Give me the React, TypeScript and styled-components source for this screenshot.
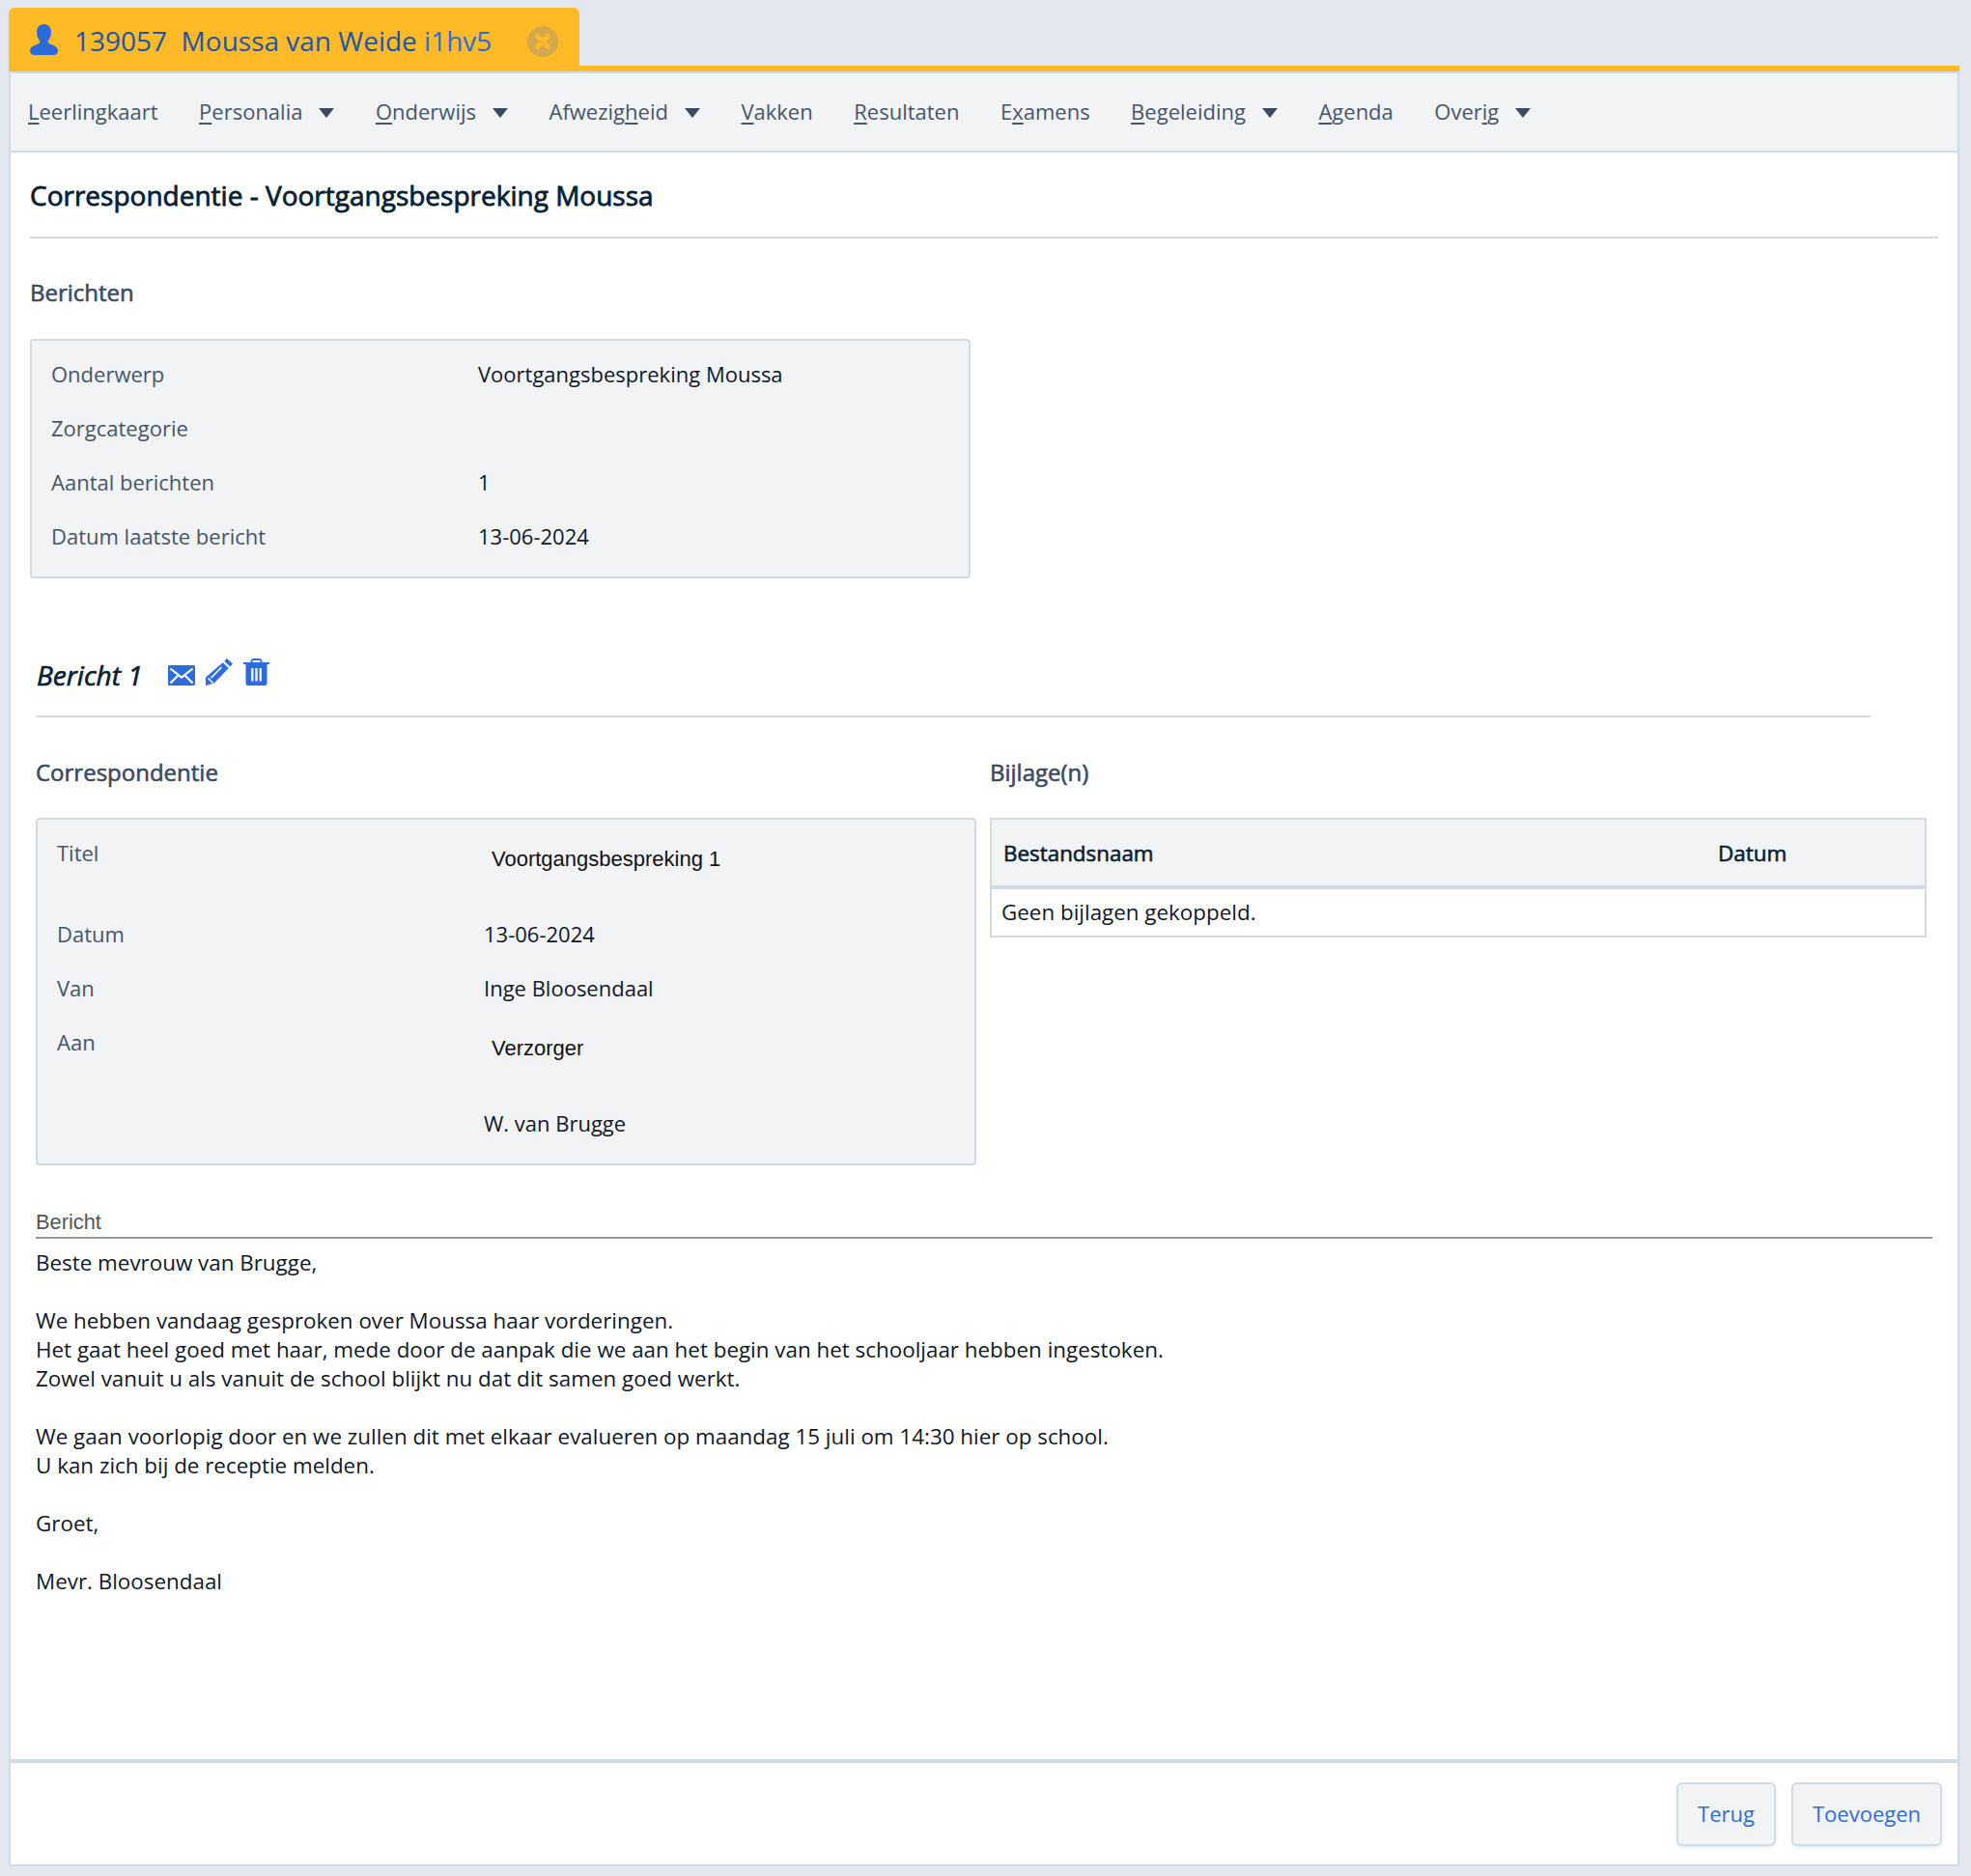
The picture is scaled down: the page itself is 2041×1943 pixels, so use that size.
import React from "react";
import styled, { createGlobalStyle } from "styled-components";

const Global = createGlobalStyle`
  html, body { margin: 0; padding: 0; background: #e3e8f0; }
  * { box-sizing: border-box; }
  body { font-family: "Open Sans", "Noto Sans", sans-serif; font-size: 22px; color: #0f172a; }
`;

const Page = styled.div`
  width: 2041px;
  height: 1943px;
  padding: 8px 12px 10px 9px;
  display: flex;
  flex-direction: column;
`;
const TabStrip = styled.div`
  flex: none;
  height: 66px;
  border-bottom: 6px solid #ffba27;
  display: flex;
`;
const Tab = styled.div`
  width: 591px;
  height: 66px;
  background: #ffba27;
  border-radius: 6px 6px 0 0;
  padding: 2px 22px 0 22px;
  display: flex;
  align-items: center;
  color: #1d55ad;
  font-size: 28px;
  white-space: pre;
`;
const TabIcon = styled.svg`
  width: 29px;
  height: 32px;
  margin: 0 17px 2px 0;
  flex: none;
`;
const TabId = styled.span`
  flex: none;
`;
const TabClass = styled.span`
  color: #2f6bdc;
`;
const CloseIcon = styled.svg`
  width: 32px;
  height: 32px;
  margin: 2px 0 0 auto;
  flex: none;
`;
const Panel = styled.div`
  flex: 1;
  min-height: 0;
  background: #fff;
  border: 2px solid #d1dbe6;
  display: flex;
  flex-direction: column;
`;
const MenuBar = styled.nav`
  flex: none;
  height: 82px;
  padding: 0 18px 2px;
  background: #f1f3f5;
  border-bottom: 2px solid #d1dbe6;
  display: flex;
  align-items: center;
  gap: 42.5px;
  color: #475569;
`;
const MenuItem = styled.span`
  display: flex;
  align-items: center;
  gap: 17px;
  white-space: nowrap;
  u { text-underline-offset: 3px; text-decoration-thickness: 2px; }
`;
const Caret = styled.i`
  width: 0;
  height: 0;
  margin-top: 4px;
  border-left: 8.5px solid transparent;
  border-right: 8.5px solid transparent;
  border-top: 10px solid #3c4a60;
`;
const Content = styled.main`
  flex: 1;
  min-height: 0;
  padding: 0 20px;
`;
const PageTitle = styled.h1`
  margin: 0;
  height: 89px;
  border-bottom: 2px solid #d1dbe6;
  line-height: 88px;
  font-size: 28px;
  font-weight: 400;
  -webkit-text-stroke: 0.8px #0a1f33;
  color: #0a1f33;
`;
const SectionTitle = styled.h2`
  margin: 0;
  height: 30px;
  line-height: 29px;
  font-size: 24px;
  font-weight: 400;
  -webkit-text-stroke: 0.6px #3c4a60;
  color: #3c4a60;
`;
const FirstTitle = styled(SectionTitle)`
  margin-top: 41px;
  margin-bottom: 33px;
`;
const InfoBox = styled.section`
  width: 974px;
  height: 248px;
  padding: 6px 20px;
  background: #f1f3f5;
  border: 2px solid #d1dbe6;
  border-radius: 4px;
`;
const Row = styled.div<{ $h?: number }>`
  display: grid;
  grid-template-columns: 442px 1fr;
  height: ${(p) => p.$h ?? 56}px;
  line-height: 56px;
  white-space: nowrap;
`;
const Label = styled.span`
  color: #475569;
`;
const Value = styled.span`
  color: #111827;
`;
const PlainValue = styled.span`
  font-family: "Liberation Sans", Arial, sans-serif;
  font-size: 22px;
  color: #111;
  margin: 7px 0 0 8px;
`;
const Message = styled.section`
  padding-left: 6px;
  margin-top: 78px;
`;
const MessageHead = styled.div`
  width: 1900px;
  height: 66px;
  padding-left: 1px;
  border-bottom: 2px solid #d1dbe6;
  display: flex;
  align-items: flex-start;
`;
const MessageTitle = styled.h2`
  margin: 0;
  height: 44px;
  line-height: 44px;
  font-size: 28px;
  font-weight: 400;
  font-style: italic;
  -webkit-text-stroke: 0.7px #0a1f33;
  color: #0a1f33;
`;
const IconRow = styled.div`
  display: flex;
  align-items: flex-end;
  gap: 11px;
  margin: 5px 0 0 26px;
  height: 28px;
  color: #2d6cdf;
`;
const Ico = styled.svg<{ $w: number; $h: number }>`
  width: ${(p) => p.$w}px;
  height: ${(p) => p.$h}px;
  flex: none;
`;
const Columns = styled.div`
  display: grid;
  grid-template-columns: 974px 970px;
  gap: 14px;
  margin-top: 42px;
`;
const ColTitle = styled(SectionTitle)`
  margin-bottom: 32px;
`;
const FieldBox = styled.div`
  height: 360px;
  padding: 6px 20px;
  background: #f1f3f5;
  border: 2px solid #d1dbe6;
  border-radius: 4px;
`;
const Table = styled.table`
  width: 970px;
  border-collapse: separate;
  border-spacing: 0;
  table-layout: fixed;
  border: 2px solid #d1dbe6;
`;
const Th = styled.th<{ $w?: number }>`
  height: 72px;
  text-align: left;
  padding: 0 12px;
  background: #f1f3f5;
  font-size: 22.4px;
  font-weight: 400;
  -webkit-text-stroke: 0.6px #0a1f33;
  border-bottom: 4px solid #d1dbe6;
  color: #0a1f33;
  ${(p) => (p.$w ? `width: ${p.$w}px;` : "")}
`;
const Td = styled.td`
  height: 48px;
  padding: 0 10px 2px;
  color: #111827;
  font-size: 22.4px;
`;
const BodyLabel = styled.div`
  margin-top: 43px;
  line-height: 31px;
  height: 33px;
  width: 1964px;
  font-family: "Liberation Sans", Arial, sans-serif;
  font-size: 21.8px;
  color: #555;
  border-bottom: 2px solid #999;
`;
const BodyText = styled.div`
  margin-top: 10px;
  line-height: 30px;
  font-size: 22.4px;
  color: #111827;
  white-space: pre-line;
`;
const Footer = styled.footer`
  flex: none;
  height: 109px;
  border-top: 4px solid #d1dbe6;
  padding: 20px 16px 0;
  display: flex;
  justify-content: flex-end;
  gap: 16px;
`;
const Button = styled.button<{ $w: number }>`
  width: ${(p) => p.$w}px;
  height: 66px;
  background: #f1f3f5;
  border: 2px solid #d1dbe6;
  border-radius: 6px;
  box-shadow: 0 2px 4px rgba(100, 116, 139, 0.12);
  color: #2f6bdc;
  font: inherit;
  padding: 0 0 2px;
`;

const menu: { pre: string; key: string; post: string; caret?: boolean }[] = [
  { pre: "", key: "L", post: "eerlingkaart" },
  { pre: "", key: "P", post: "ersonalia", caret: true },
  { pre: "", key: "O", post: "nderwijs", caret: true },
  { pre: "Afwezig", key: "h", post: "eid", caret: true },
  { pre: "", key: "V", post: "akken" },
  { pre: "", key: "R", post: "esultaten" },
  { pre: "E", key: "x", post: "amens" },
  { pre: "", key: "B", post: "egeleiding", caret: true },
  { pre: "", key: "A", post: "genda" },
  { pre: "Over", key: "i", post: "g", caret: true },
];

const bodyText = `Beste mevrouw van Brugge,

We hebben vandaag gesproken over Moussa haar vorderingen.
Het gaat heel goed met haar, mede door de aanpak die we aan het begin van het schooljaar hebben ingestoken.
Zowel vanuit u als vanuit de school blijkt nu dat dit samen goed werkt.

We gaan voorlopig door en we zullen dit met elkaar evalueren op maandag 15 juli om 14:30 hier op school.
U kan zich bij de receptie melden.

Groet,

Mevr. Bloosendaal`;

export default function App() {
  return (
    <Page>
      <Global />
      <TabStrip>
        <Tab>
          <TabIcon viewBox="0 0 29 32">
            <path
              fill="#2a6ad9"
              d="M14.500 0C19 0 22 3.500 22 8.500c0 3.500-1.500 6.500-3 8.500-.8 1.100-.4 2.300.8 2.900l5.500 2.700c2.400 1.200 3.700 3 3.700 5 0 2.700-1.500 4.400-4 4.400H4c-2.500 0-4-1.700-4-4.400 0-2 1.300-3.800 3.700-5l5.500-2.700c1.200-.6 1.600-1.800.8-2.900C8.500 15 7 12 7 8.500 7 3.500 10 0 14.500 0z"
            />
          </TabIcon>
          <TabId>139057  </TabId>
          <span>Moussa van Weide&nbsp;</span>
          <TabClass>i1hv5</TabClass>
          <CloseIcon viewBox="0 0 32 32">
            <circle cx="16" cy="16" r="16" fill="#d4a94d" />
            <path d="M10.500 10.500l11 11M21.500 10.500l-11 11" stroke="#ffba27" strokeWidth="5" strokeLinecap="round" />
          </CloseIcon>
        </Tab>
      </TabStrip>
      <Panel>
        <MenuBar>
          {menu.map((m) => (
            <MenuItem key={m.pre + m.key + m.post}>
              <span>
                {m.pre}
                <u>{m.key}</u>
                {m.post}
              </span>
              {m.caret && <Caret />}
            </MenuItem>
          ))}
        </MenuBar>
        <Content>
          <PageTitle>Correspondentie - Voortgangsbespreking Moussa</PageTitle>
          <FirstTitle>Berichten</FirstTitle>
          <InfoBox>
            <Row>
              <Label>Onderwerp</Label>
              <Value>Voortgangsbespreking Moussa</Value>
            </Row>
            <Row>
              <Label>Zorgcategorie</Label>
              <Value />
            </Row>
            <Row>
              <Label>Aantal berichten</Label>
              <Value>1</Value>
            </Row>
            <Row>
              <Label>Datum laatste bericht</Label>
              <Value>13-06-2024</Value>
            </Row>
          </InfoBox>
          <Message>
            <MessageHead>
              <MessageTitle>Bericht 1</MessageTitle>
              <IconRow>
                <Ico $w={28} $h={21} viewBox="0 0 28 21">
                  <rect width="28" height="21" rx="1.500" fill="currentColor" />
                  <path d="M2.500 3.500L14 12.500l11.500-9M2.500 18.500l8-8M25.500 18.500l-8-8" fill="none" stroke="#fff" strokeWidth="2.200" />
                </Ico>
                <Ico $w={28} $h={28} viewBox="0 0 28 28">
                  <path fill="currentColor" d="M22 0l6 5.500-2.600 2.900-6.100-5.700zM17.800 4.300l6 5.700L8.800 25.500 0 28v-8.500z" />
                  <path d="M16.500 9L5.500 20.200" stroke="#fff" strokeWidth="1.600" />
                  <path d="M2.500 20.500l5.200 5" stroke="#fff" strokeWidth="1.600" />
                </Ico>
                <Ico $w={27} $h={28} viewBox="0 0 27 28">
                  <path d="M0 5h27" stroke="currentColor" strokeWidth="2" />
                  <path d="M8.500 4.500V3C8.500 1.500 9.500 1 11 1h5c1.500 0 2.500.5 2.500 2v1.500" fill="none" stroke="currentColor" strokeWidth="1.800" />
                  <path fillRule="evenodd" fill="currentColor" d="M2.500 6h22v19.500a2.500 2.500 0 0 1-2.500 2.500H5a2.500 2.500 0 0 1-2.500-2.500zM8.200 10v13.500h2.200V10zM12.400 10v13.500h2.200V10zM16.600 10v13.500h2.200V10z" />
                </Ico>
              </IconRow>
            </MessageHead>
            <Columns>
              <div>
                <ColTitle>Correspondentie</ColTitle>
                <FieldBox>
                  <Row $h={84}>
                    <Label>Titel</Label>
                    <PlainValue>Voortgangsbespreking 1</PlainValue>
                  </Row>
                  <Row>
                    <Label>Datum</Label>
                    <Value>13-06-2024</Value>
                  </Row>
                  <Row>
                    <Label>Van</Label>
                    <Value>Inge Bloosendaal</Value>
                  </Row>
                  <Row $h={84}>
                    <Label>Aan</Label>
                    <PlainValue>Verzorger</PlainValue>
                  </Row>
                  <Row>
                    <Label />
                    <Value>W. van Brugge</Value>
                  </Row>
                </FieldBox>
              </div>
              <div>
                <ColTitle>Bijlage(n)</ColTitle>
                <Table>
                  <thead>
                    <tr>
                      <Th $w={740}>Bestandsnaam</Th>
                      <Th>Datum</Th>
                    </tr>
                  </thead>
                  <tbody>
                    <tr>
                      <Td colSpan={2}>Geen bijlagen gekoppeld.</Td>
                    </tr>
                  </tbody>
                </Table>
              </div>
            </Columns>
            <BodyLabel>Bericht</BodyLabel>
            <BodyText>{bodyText}</BodyText>
          </Message>
        </Content>
        <Footer>
          <Button $w={103}>Terug</Button>
          <Button $w={156}>Toevoegen</Button>
        </Footer>
      </Panel>
    </Page>
  );
}
